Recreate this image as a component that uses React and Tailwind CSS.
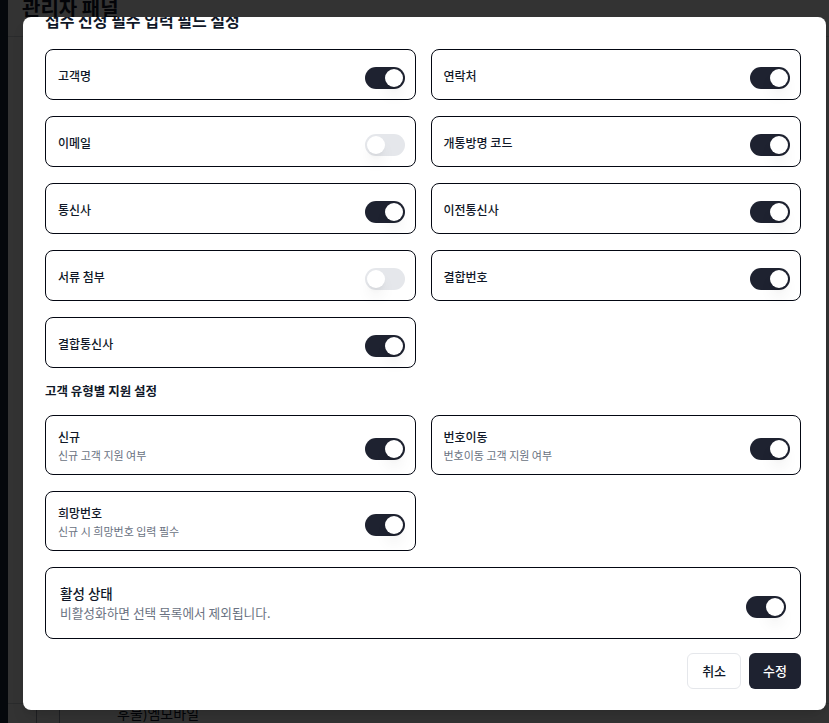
import { useState } from 'react';

const FIELDS = [
  { key: 'name', label: '고객명', on: true },
  { key: 'phone', label: '연락처', on: true },
  { key: 'email', label: '이메일', on: false },
  { key: 'code', label: '개통방명 코드', on: true },
  { key: 'carrier', label: '통신사', on: true },
  { key: 'prevCarrier', label: '이전통신사', on: true },
  { key: 'docs', label: '서류 첨부', on: false },
  { key: 'bundleNo', label: '결합번호', on: true },
  { key: 'bundleCarrier', label: '결합통신사', on: true },
];

const TYPES = [
  { key: 'new', label: '신규', desc: '신규 고객 지원 여부', on: true },
  { key: 'port', label: '번호이동', desc: '번호이동 고객 지원 여부', on: true },
  { key: 'wish', label: '희망번호', desc: '신규 시 희망번호 입력 필수', on: true },
];

function Toggle({ checked, onChange }) {
  return (
    <button
      type="button"
      onClick={() => onChange(!checked)}
      className={`mt-[7px] inline-flex h-[22px] w-10 shrink-0 items-center rounded-full border-2 border-transparent ${
        checked ? 'bg-[#1e2230]' : 'bg-gray-200'
      }`}
    >
      <span
        className={`block h-[18px] w-[18px] rounded-full bg-white shadow-lg ${checked ? 'translate-x-[18px]' : 'translate-x-0'}`}
      />
    </button>
  );
}

export default function App() {
  const [fields, setFields] = useState(Object.fromEntries(FIELDS.map((f) => [f.key, f.on])));
  const [types, setTypes] = useState(Object.fromEntries(TYPES.map((t) => [t.key, t.on])));
  const [active, setActive] = useState(true);

  return (
    <div className="relative h-[723px] w-[829px] overflow-hidden bg-white font-['Noto_Sans_CJK_KR','Noto_Sans',sans-serif] text-gray-900">
      {/* page behind the dialog */}
      <div className="flex h-full">
        <aside className="w-2 shrink-0 bg-slate-800" />
        <main className="flex flex-1 flex-col">
          <div className="-mt-[6px] flex h-[43px] items-start border-b border-gray-300 pl-[14px]">
            <h1 className="text-xl font-bold leading-7">관리자 패널</h1>
          </div>
          <div className="flex-1" />
          <div className="flex h-[20px] border-t border-gray-300">
            <div className="w-[29px] border-r border-gray-400" />
            <div className="w-[23px] border-r border-gray-400" />
            <div className="mt-[-1px] pl-[57px] text-sm leading-5">후불)엠모바일</div>
          </div>
        </main>
      </div>

      {/* overlay */}
      <div className="absolute inset-0 bg-black/80" />

      {/* dialog */}
      <div className="absolute left-[23px] top-[17px] h-[693px] w-[803px] overflow-hidden rounded-lg bg-white shadow-lg">
        <div className="-mt-[9px] pl-[22px] pr-[25px]">
          <h2 className="mb-[17px] h-6 text-base font-semibold leading-6">접수 신청 필수 입력 필드 설정</h2>

          <div className="grid grid-cols-2 gap-x-[15px] gap-y-4">
            {FIELDS.map((f) => (
              <div key={f.key} className="flex h-[51px] items-center justify-between rounded-lg border border-gray-950 pl-3 pr-[10px]">
                <span className="mt-[3px] text-xs font-medium">{f.label}</span>
                <Toggle checked={fields[f.key]} onChange={(v) => setFields({ ...fields, [f.key]: v })} />
              </div>
            ))}
          </div>

          <h3 className="mb-[14px] mt-[13px] text-[12.5px] font-semibold leading-5">고객 유형별 지원 설정</h3>

          <div className="grid grid-cols-2 gap-x-[15px] gap-y-4">
            {TYPES.map((t) => (
              <div key={t.key} className="flex h-[60px] items-center justify-between rounded-lg border border-gray-950 pl-3 pr-[10px]">
                <div className="flex flex-col">
                  <span className="text-xs font-medium leading-[18px]">{t.label}</span>
                  <span className="mt-px text-[11px] leading-4 text-gray-500">{t.desc}</span>
                </div>
                <Toggle checked={types[t.key]} onChange={(v) => setTypes({ ...types, [t.key]: v })} />
              </div>
            ))}
          </div>

          <div className="mt-4 flex h-[72px] items-center justify-between rounded-lg border border-gray-950 pl-[14px] pr-[14px]">
            <div className="flex flex-col">
              <span className="text-[13.5px] font-medium leading-5">활성 상태</span>
              <span className="text-[12.7px] leading-5 text-gray-500">비활성화하면 선택 목록에서 제외됩니다.</span>
            </div>
            <Toggle checked={active} onChange={setActive} />
          </div>

          <div className="mt-[14px] flex justify-end gap-2">
            <button type="button" className="h-9 rounded-md border border-gray-200 bg-white px-3.5 text-[13px] font-medium">
              취소
            </button>
            <button type="button" className="h-9 rounded-md bg-[#1e2230] px-3.5 text-[13px] font-medium text-white">
              수정
            </button>
          </div>
        </div>
      </div>
    </div>
  );
}
